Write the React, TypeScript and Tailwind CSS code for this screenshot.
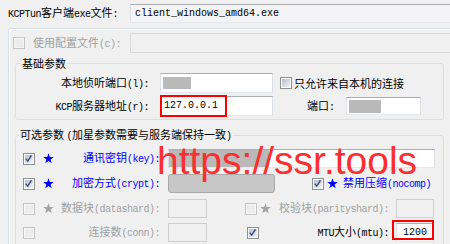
import React from "react";

// half-width latin, like the SimSun ascii glyphs in the dialog
function M({ children }: { children: React.ReactNode }) {
  return <span className="font-['Liberation_Mono',monospace] text-[10px] tracking-[-0.5px]">{children}</span>;
}

// values typed into the edit boxes
function V({ children }: { children: React.ReactNode }) {
  return <span className="font-['Liberation_Mono',monospace] text-[10px]">{children}</span>;
}

function Check({ checked = false, disabled = false }: { checked?: boolean; disabled?: boolean }) {
  return (
    <span
      className={`relative flex items-center justify-center w-[12px] h-[12px] shrink-0 border ${
        disabled ? "border-[#c4c4c4] bg-[#f6f6f6]" : "border-[#8e8f8f] bg-white"
      }`}
    >
      <span
        className={`w-[8px] h-[8px] ${
          disabled ? "bg-[#ececec]" : "bg-gradient-to-br from-[#b9bec6] to-[#f2f3f5]"
        }`}
      />
      {checked && (
        <svg viewBox="0 0 12 12" className="absolute inset-0 w-[10px] h-[10px]">
          <path d="M2 5.5 L4.5 8.5 L9 1.5" fill="none" stroke="#3b4f8e" strokeWidth="1.7" />
        </svg>
      )}
    </span>
  );
}

function Star({ gray = false }: { gray?: boolean }) {
  return (
    <svg viewBox="0 0 11 11" className="w-[11px] h-[11px] shrink-0">
      <polygon
        points="5.5,0.2 6.79,4.02 10.83,4.07 7.59,6.48 8.79,10.33 5.5,8 2.21,10.33 3.41,6.48 0.17,4.07 4.21,4.02"
        fill={gray ? "#a3a3a3" : "#0000ff"}
      />
    </svg>
  );
}

function Box({ className = "", children }: { className?: string; children?: React.ReactNode }) {
  return (
    <div className={`flex items-center shrink-0 border-t border-t-[#abadb3] border-x border-x-[#dbdfe6] border-b border-b-[#e3e9ef] ${className}`}>
      {children}
    </div>
  );
}

export default function App() {
  return (
    <div className="relative w-[450px] h-[244px] overflow-hidden bg-[#f0f0f0] text-[11px] leading-[14px] text-black font-['Noto_Sans_CJK_SC',sans-serif]">
      {/* exe file */}
      <div className="flex items-center h-[19px] mt-[4px] pl-[8px]">
        <span className="w-[122px] shrink-0 whitespace-nowrap">
          <M>KCPTun</M>客户端<M>exe</M>文件<M>:</M>
        </span>
        <Box className="w-[330px] h-[19px] bg-[#f4f4f4] pl-[4px]">
          <V>client_windows_amd64.exe</V>
        </Box>
      </div>

      {/* outer frame */}
      <div className="mt-[5px] ml-[8px] w-[460px] h-[230px] border-t border-l border-[#d5dfe5] rounded-tl-[3px] shadow-[inset_1px_1px_0_#ffffff]">
        <div className="flex items-center h-[20px] mt-[4px] pl-[4px]">
          <Check disabled />
          <span className="ml-[8px] w-[97px] shrink-0 text-[#a0a0a0] whitespace-nowrap">
            使用配置文件<M>(c):</M>
          </span>
          <div className="w-[330px] h-[20px] shrink-0 border border-[#d9d9d9]" />
        </div>

        {/* basic */}
        <fieldset className="mt-[3px] ml-[6px] w-[429px] border border-[#d5dfe5] rounded-[3px] pb-[3px]">
          <legend className="ml-[5px] px-[1px] leading-[14px]">基础参数</legend>
          <div className="flex items-center h-[20px] mt-[3px]">
            <span className="w-[133px] shrink-0 text-right whitespace-nowrap">
              本地侦听端口<M>(l):</M>
            </span>
            <Box className="ml-[11px] w-[113px] h-[20px] bg-white pl-[2px]">
              <div className="w-[28px] h-[12px] bg-[#b9b9b9]" />
            </Box>
            <span className="ml-[7px]">
              <Check />
            </span>
            <span className="ml-[2px] whitespace-nowrap">只允许来自本机的连接</span>
          </div>
          <div className="flex items-center h-[20px] mt-[3px]">
            <span className="w-[133px] shrink-0 text-right whitespace-nowrap">
              <M>KCP</M>服务器地址<M>(r):</M>
            </span>
            <Box className="ml-[11px] w-[113px] h-[20px] bg-white pl-[3px]">
              <V>127.0.0.1</V>
            </Box>
            <span className="ml-[34px] whitespace-nowrap">
              端口<M>:</M>
            </span>
            <Box className="ml-[11px] w-[75px] h-[18px] bg-white pl-[2px]">
              <div className="w-[32px] h-[13px] bg-[#b9b9b9]" />
            </Box>
          </div>
        </fieldset>

        {/* optional */}
        <fieldset className="mt-[7px] ml-[6px] w-[429px] h-[140px] border border-[#d5dfe5] rounded-[3px]">
          <legend className="ml-[3px] px-[1px] leading-[14px] whitespace-nowrap">
            可选参数 <M>(</M>加星参数需要与服务端保持一致<M>)</M>
          </legend>

          <div className="flex items-center h-[19px] mt-[5px]">
            <span className="ml-[7px]"><Check checked /></span>
            <span className="ml-[8px]"><Star /></span>
            <span className="w-[106px] shrink-0 text-right text-[#0000ff] whitespace-nowrap">
              通讯密钥<M>(key):</M>
            </span>
            <Box className="ml-[8px] w-[267px] h-[19px] bg-white">
              <div className="w-[100px] h-[17px] bg-[#b9b9b9]" />
            </Box>
          </div>

          <div className="flex items-center h-[19px] mt-[6px]">
            <span className="ml-[7px]"><Check checked /></span>
            <span className="ml-[8px]"><Star /></span>
            <span className="w-[106px] shrink-0 text-right text-[#0000ff] whitespace-nowrap">
              加密方式<M>(crypt):</M>
            </span>
            <div className="ml-[8px] w-[107px] h-[19px] shrink-0 rounded-[3px] border border-[#a9a9a9] bg-[#c7c7c7]" />
            <span className="ml-[37px]"><Check checked /></span>
            <span className="ml-[3px]"><Star /></span>
            <span className="ml-[5px] text-[#0000ff] whitespace-nowrap">
              禁用压缩<M>(nocomp)</M>
            </span>
          </div>

          <div className="flex items-center h-[19px] mt-[6px]">
            <span className="ml-[7px]"><Check disabled /></span>
            <span className="ml-[8px]"><Star gray /></span>
            <span className="w-[106px] shrink-0 text-right text-[#a0a0a0] whitespace-nowrap">
              数据块<M>(datashard):</M>
            </span>
            <div className="ml-[8px] w-[39px] h-[19px] shrink-0 border border-[#cfcfcf]" />
            <span className="ml-[38px]"><Check disabled /></span>
            <span className="ml-[3px]"><Star gray /></span>
            <span className="w-[118px] shrink-0 text-right text-[#a0a0a0] whitespace-nowrap">
              校验块<M>(parityshard):</M>
            </span>
            <div className="ml-[7px] w-[38px] h-[19px] shrink-0 border border-[#cfcfcf]" />
          </div>

          <div className="flex items-center h-[19px] mt-[5px]">
            <span className="ml-[7px]"><Check disabled /></span>
            <span className="ml-[8px] w-[11px] shrink-0" />
            <span className="w-[106px] shrink-0 text-right text-[#a0a0a0] whitespace-nowrap">
              连接数<M>(conn):</M>
            </span>
            <div className="ml-[8px] w-[39px] h-[19px] shrink-0 border border-[#cfcfcf]" />
            <span className="ml-[40px]"><Check checked /></span>
            <span className="ml-[1px] w-[11px] shrink-0" />
            <span className="w-[118px] shrink-0 text-right whitespace-nowrap">
              <M>MTU</M>大小<M>(mtu):</M>
            </span>
            <Box className="ml-[7px] w-[38px] h-[19px] bg-white pl-[6px]">
              <V>1200</V>
            </Box>
          </div>
        </fieldset>
      </div>

      {/* red annotation boxes */}
      <div className="absolute left-[160px] top-[95px] w-[67px] h-[22px] border-2 border-[#ff0000]" />
      <div className="absolute left-[392px] top-[220px] w-[42px] h-[20px] border-2 border-[#ff0000]" />

      {/* watermark */}
      <div className="absolute left-[157px] top-[142px] text-[39px] leading-[38px] text-[#ff2e2e] font-['Liberation_Sans',sans-serif] whitespace-nowrap">
        https://ssr.tools
      </div>
    </div>
  );
}
